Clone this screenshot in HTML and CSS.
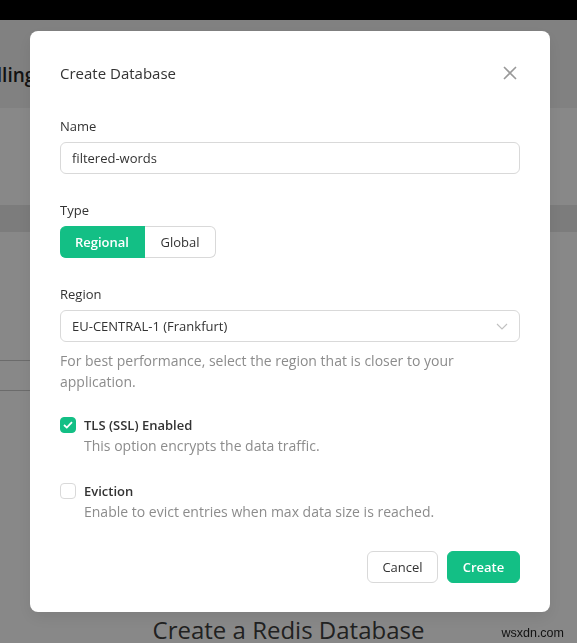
FILE: index.html
```html
<!doctype html>
<html>
  <head>
    <title>Create Database</title>
    <link rel="stylesheet" href="styles.css">
  </head>
  <body>
    <div class="topbar"></div>
    <div class="page">
      <div class="page-head">
        <h1 class="page-title">Billing</h1>
      </div>
      <div class="page-panel"></div>
      <div class="page-band"></div>
      <div class="page-list"></div>
      <div class="page-empty">
        <h2 class="empty-title">Create a Redis Database</h2>
      </div>
    </div>

    <div class="overlay">
      <div class="modal">
        <div class="modal-header">
          <div class="modal-title">Create Database</div>
          <button class="close-btn" aria-label="Close">
            <svg width="14" height="14" viewBox="0 0 14 14">
              <path d="M1 1L13 13M13 1L1 13" stroke="#999" stroke-width="1.6" fill="none" />
            </svg>
          </button>
        </div>

        <div class="field">
          <div class="field-label">Name</div>
          <input class="text-input" type="text" value="filtered-words" />
        </div>

        <div class="field">
          <div class="field-label">Type</div>
          <div class="segmented">
            <div class="segment segment-active">Regional</div>
            <div class="segment">Global</div>
          </div>
        </div>

        <div class="field">
          <div class="field-label">Region</div>
          <div class="select">
            <span>EU-CENTRAL-1 (Frankfurt)</span>
            <svg width="12" height="7" viewBox="0 0 12 7">
              <path d="M1 1L6 6L11 1" stroke="#c0c0c0" stroke-width="1.1" fill="none" />
            </svg>
          </div>
          <div class="help">For best performance, select the region that is closer to your application.</div>
        </div>

        <div class="option option-first">
          <div class="option-row">
            <span class="checkbox checkbox-on">
              <svg width="10" height="8" viewBox="0 0 10 8">
                <path d="M1 4L3.8 6.6L9 1.2" stroke="#fff" stroke-width="1.8" fill="none" />
              </svg>
            </span>
            <span class="option-label">TLS (SSL) Enabled</span>
          </div>
          <div class="option-desc">This option encrypts the data traffic.</div>
        </div>

        <div class="option">
          <div class="option-row">
            <span class="checkbox"></span>
            <span class="option-label">Eviction</span>
          </div>
          <div class="option-desc">Enable to evict entries when max data size is reached.</div>
        </div>

        <div class="modal-footer">
          <button class="btn btn-cancel">Cancel</button>
          <button class="btn btn-create">Create</button>
        </div>
      </div>
    </div>

    <div class="watermark">wsxdn.com</div>
  </body>
</html>
```

FILE: styles.css
```css
* {
  margin: 0;
  padding: 0;
  box-sizing: border-box;
  font-family: "Open Sans", sans-serif;
}

body {
  height: 100vh;
  background: #f8f8f8;
  overflow: hidden;
  position: relative;
}

.topbar {
  height: 20px;
  background: #000;
}

.page-head {
  height: 88px;
  background: #ebebeb;
  padding-top: 43px;
}

.page-title {
  margin-left: -21px;
  font-size: 19px;
  line-height: 24px;
  font-weight: 600;
  color: #222;
}

.page-panel {
  height: 97px;
}

.page-band {
  height: 27px;
  background: #e2e2e2;
}

.page-list {
  width: 540px;
  height: 31px;
  margin-top: 128px;
  border-top: 1px solid #c4c4c4;
  border-bottom: 1px solid #c4c4c4;
}

.page-empty {
  text-align: center;
  padding-top: 224px;
}

.empty-title {
  font-size: 24px;
  line-height: 30px;
  font-weight: 400;
  color: #3c3c3c;
}

.overlay {
  position: fixed;
  top: 0;
  left: 0;
  right: 0;
  bottom: 0;
  background: rgba(0, 0, 0, 0.45);
  padding: 31px 0 0 30px;
}

.modal {
  width: 520px;
  background: #fff;
  border-radius: 8px;
  padding: 31px 30px 29px;
  box-shadow: 0 6px 16px rgba(0, 0, 0, 0.08);
}

.modal-header {
  display: flex;
  justify-content: space-between;
  align-items: center;
  height: 22px;
  margin-bottom: 31px;
}

.modal-title {
  font-size: 15px;
  line-height: 22px;
  font-weight: 500;
  color: #333;
}

.close-btn {
  display: flex;
  background: none;
  border: none;
  margin-right: 3px;
  cursor: pointer;
}

.field {
  margin-bottom: 25px;
}

.field-label {
  font-size: 13px;
  line-height: 22px;
  color: #333;
  margin-bottom: 5px;
}

.text-input,
.select {
  width: 100%;
  height: 32px;
  padding: 0 11px;
  border: 1px solid #d9d9d9;
  border-radius: 6px;
  font-size: 13px;
  color: #333;
  outline: none;
  background: #fff;
}

.select {
  display: flex;
  justify-content: space-between;
  align-items: center;
  padding-right: 11px;
}

.help {
  margin-top: 8px;
  font-size: 14px;
  line-height: 21px;
  color: #8c8c8c;
}

.segmented {
  display: flex;
}

.segment {
  height: 32px;
  width: 71px;
  display: flex;
  align-items: center;
  justify-content: center;
  font-size: 13px;
  color: #333;
  border: 1px solid #d9d9d9;
  border-left: none;
  border-radius: 0 6px 6px 0;
}

.segment-active {
  width: 85px;
  background: #13bf85;
  border-color: #13bf85;
  color: #fff;
  font-weight: 600;
  border-radius: 6px 0 0 6px;
}

.option-first {
  margin-top: -3px;
}

.option {
  margin-bottom: 24px;
}

.option + .option {
  margin-bottom: 29px;
}

.option-row {
  display: flex;
  align-items: center;
  height: 22px;
  gap: 8px;
}

.checkbox {
  width: 16px;
  height: 16px;
  border: 1px solid #d9d9d9;
  border-radius: 4px;
  background: #fff;
  display: flex;
  align-items: center;
  justify-content: center;
}

.checkbox-on {
  background: #13bf85;
  border-color: #13bf85;
}

.option-label {
  font-size: 13px;
  font-weight: 600;
  color: #333;
}

.option-desc {
  padding-left: 24px;
  font-size: 14px;
  line-height: 20px;
  color: #8c8c8c;
}

.modal-footer {
  display: flex;
  justify-content: flex-end;
  gap: 9px;
}

.btn {
  height: 32px;
  border-radius: 6px;
  font-size: 13px;
  cursor: pointer;
}

.btn-cancel {
  width: 71px;
  background: #fff;
  border: 1px solid #d9d9d9;
  color: #333;
}

.btn-create {
  width: 73px;
  background: #13bf85;
  border: 1px solid #13bf85;
  color: #fff;
  font-weight: 600;
}

.watermark {
  position: absolute;
  right: 13px;
  bottom: 3px;
  font-family: "Liberation Sans", sans-serif;
  font-size: 12.5px;
  color: #111;
}
```
